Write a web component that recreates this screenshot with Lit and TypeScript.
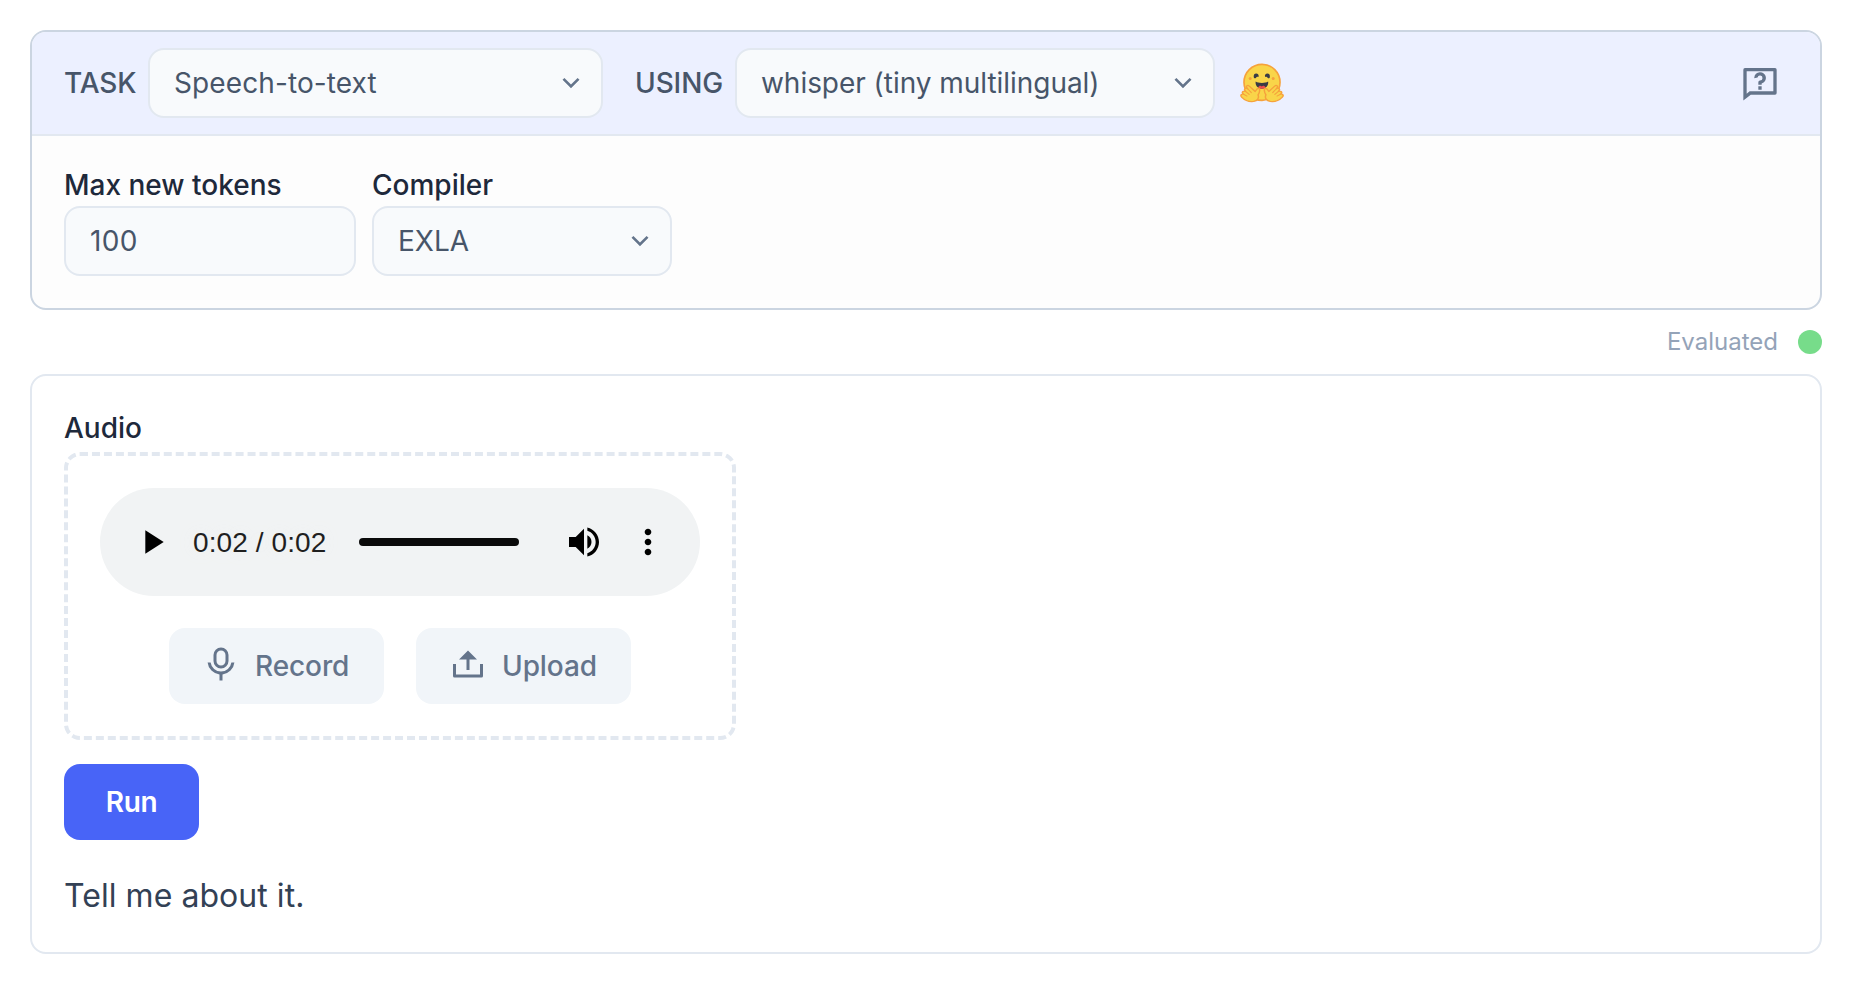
import { LitElement, html, css, svg } from "lit";
import { customElement, property } from "lit/decorators.js";

const ICONS: Record<string, string> = {
  chevron: "M12 13.172l4.95-4.95 1.414 1.414L12 16 5.636 9.636 7.05 8.222z",
  help: "M5.763 17H20V5H4v13.385L5.763 17zm.692 2L2 22.5V4a1 1 0 0 1 1-1h18a1 1 0 0 1 1 1v14a1 1 0 0 1-1 1H6.455zM11 14h2v2h-2v-2zm-2.433-5.187A3.501 3.501 0 1 1 13 12.355V13h-2v-1.5a1 1 0 0 1 1-1 1.5 1.5 0 1 0-1.471-1.794l-1.962.393z",
  mic: "M12 3a3 3 0 0 0-3 3v4a3 3 0 1 0 6 0V6a3 3 0 0 0-3-3zm0-2a5 5 0 0 1 5 5v4a5 5 0 0 1-10 0V6a5 5 0 0 1 5-5zM3.055 11H5.07a7.002 7.002 0 0 0 13.858 0h2.016A9.004 9.004 0 0 1 13 18.945V23h-2v-4.055A9.004 9.004 0 0 1 3.055 11z",
  upload: "M4 19h16v-7h2v8a1 1 0 0 1-1 1H3a1 1 0 0 1-1-1v-8h2v7zm9-10v7h-2V9H6l6-6 6 6h-5z",
  play: "M8 5v14l11-7z",
  volume: "M3 9v6h4l5 5V4L7 9H3zm13.5 3A4.5 4.5 0 0 0 14 7.97v8.05c1.48-.73 2.5-2.25 2.5-4.02zM14 3.23v2.06c2.89.86 5 3.54 5 6.71s-2.11 5.85-5 6.71v2.06c4.01-.91 7-4.49 7-8.77s-2.99-7.86-7-8.77z",
  more: "M12 8c1.1 0 2-.9 2-2s-.9-2-2-2-2 .9-2 2 .9 2 2 2zm0 2c-1.1 0-2 .9-2 2s.9 2 2 2 2-.9 2-2-.9-2-2-2zm0 6c-1.1 0-2 .9-2 2s.9 2 2 2 2-.9 2-2-.9-2-2-2z",
};

@customElement("ui-icon")
class UiIcon extends LitElement {
  @property() name = "";
  static styles = css`
    :host { display: block; flex: none; width: 40px; height: 40px; }
    svg { display: block; width: 100%; height: 100%; fill: currentColor; }
  `;
  render() {
    return html`<svg viewBox="0 0 24 24">${svg`<path d=${ICONS[this.name]}></path>`}</svg>`;
  }
}

@customElement("select-box")
class SelectBox extends LitElement {
  @property() value = "";
  static styles = css`
    :host {
      box-sizing: border-box; display: flex; align-items: center; justify-content: space-between;
      height: 70px; padding: 0 14px 0 24px; border: 2px solid #e2e8f0; border-radius: 16px;
      background: #f8fafc; color: #475569; font-size: 28px; white-space: nowrap;
    }
    .chevron { width: 32px; height: 32px; color: #64748b; }
  `;
  render() {
    return html`<span>${this.value}</span><ui-icon class="chevron" name="chevron"></ui-icon>`;
  }
}

@customElement("hugging-face")
class HuggingFace extends LitElement {
  static styles = css`
    :host { display: block; width: 44px; height: 40px; flex: none; }
    svg { display: block; width: 100%; height: 100%; overflow: visible; }
  `;
  hand() {
    return svg`
      <path d="M17.500 31.500c1.700-3 1.800-6.100.7-6.700-1.500-.7-2.100 1.300-3.200 3.200L9.800 22.400c-1.400-1.400-3.100-.2-2.200 1.400l.8 1.400c-1.500-1.300-3.500-.1-2.500 1.600l.6 1.100c-1.700-1-3.600.5-2.400 2.100l.7.900c-2.200-.5-3.100 1.300-1.700 2.900 2.400 2.900 6.300 5.300 10.600 4.600 3.100-.6 5.200-3.400 3.800-6.900z"
        fill="#f9d549" stroke="#f6a23c" stroke-width="1.300" stroke-linejoin="round"></path>
      <path d="M8.400 25.200l3.200 4M6.500 27.900l3.200 3.200M4.800 30.900l3 1.900"
        fill="none" stroke="#f6a23c" stroke-width="1" stroke-linecap="round"></path>`;
  }
  render() {
    return html`<svg viewBox="0 0 44 40">
      <circle cx="22" cy="20.300" r="18" fill="#f9d549" stroke="#f6a23c" stroke-width="1.700"></circle>
      <circle cx="10.200" cy="16.500" r="1.500" fill="#f6a23c"></circle>
      <circle cx="33.200" cy="16.500" r="1.500" fill="#f6a23c"></circle>
      <path d="M13.900 15.700c-.8-2.600.6-4.200 2.300-4.200s3 1.500 2.300 3.600c-1.100-.9-1.900-.3-2.500.6s-1.300.8-2.100 0z" fill="#3a3b45"></path>
      <path d="M29.700 15.700c.8-2.600-.6-4.200-2.300-4.200s-3 1.500-2.300 3.600c1.100-.9 1.900-.3 2.500.6s1.300.8 2.100 0z" fill="#3a3b45"></path>
      <path d="M15.700 19.600c1.500 1 3.500 1.400 6.200 1.400s4.700-.4 6.200-1.400c.8 3.500-1.900 7.200-6.200 7.200s-7-3.700-6.200-7.200z" fill="#3a3b45"></path>
      <path d="M18.100 25.500c.8-2 2.800-2 3.700-1 .9-1 2.900-1 3.900 1a6.500 6.500 0 0 1-7.600 0z" fill="#ef4e4e"></path>
      <g transform="translate(-1.900 2.600) scale(1.140 .960)">${this.hand()}</g>
      <g transform="translate(45.900 2.600) scale(-1.140 .960)">${this.hand()}</g>
    </svg>`;
  }
}

@customElement("audio-player")
class AudioPlayer extends LitElement {
  static styles = css`
    :host {
      box-sizing: border-box; display: flex; align-items: center; width: 600px; height: 108px;
      padding: 0 32px; border-radius: 54px; background: #f1f3f4; color: #000;
    }
    .time {
      margin: 2px 0 0 21px; width: 134px; white-space: nowrap; color: #1f1f1f; letter-spacing: 0.1px;
      font: 28px "Liberation Sans", Arial, sans-serif; text-shadow: 0 0 20px rgba(245, 245, 240, 0.6);
    }
    .track { margin-left: 32px; width: 160px; height: 8px; border-radius: 4px; background: #0a0a0a; }
    .volume { margin-left: 45px; }
    .more { margin-left: 24px; }
  `;
  render() {
    return html`
      <ui-icon name="play"></ui-icon>
      <span class="time">0:02 / 0:02</span>
      <div class="track"></div>
      <ui-icon class="volume" name="volume"></ui-icon>
      <ui-icon class="more" name="more"></ui-icon>
    `;
  }
}

@customElement("app-root")
class AppRoot extends LitElement {
  static styles = css`
    :host {
      box-sizing: border-box; display: block; height: 984px; padding: 30px; background: #fff;
      font-family: Inter, sans-serif; font-size: 28px; color: #475569;
    }
    .card { box-sizing: border-box; border: 2px solid #cbd5e1; border-radius: 16px; overflow: hidden; background: #fdfdfd; }
    .head {
      display: flex; align-items: center; height: 102px; padding: 0 40px 0 32px;
      border-bottom: 2px solid #e2e8f0; background: #ecf0ff;
    }
    .key { font-weight: 500; white-space: nowrap; letter-spacing: -0.1px; }
    .key-task { width: 84px; }
    .key-using { width: 100px; margin-left: 32px; }
    .task { width: 455px; letter-spacing: 0.1px; }
    .using { width: 480px; letter-spacing: -0.04px; }
    .logo { margin: 0 0 2px 25px; }
    .help { margin-left: auto; color: #64748b; }
    .fields { display: flex; gap: 16px; padding: 32px; }
    .label { height: 38px; line-height: 34px; font-weight: 500; color: #1e293b; }
    .input {
      box-sizing: border-box; width: 292px; height: 70px; padding: 0 24px; line-height: 66px;
      letter-spacing: 0.4px; border: 2px solid #e2e8f0; border-radius: 16px; background: #f8fafc;
    }
    .compiler { width: 300px; }
    .status {
      display: flex; justify-content: flex-end; align-items: center; gap: 20px; height: 24px;
      margin: 20px 0; font-size: 24px; line-height: 24px; color: #94a3b8;
    }
    .dot { width: 24px; height: 24px; border-radius: 50%; background: #77dc8a; }
    .output { box-sizing: border-box; height: 580px; padding: 34px 32px; border: 2px solid #e2e8f0; border-radius: 16px; }
    .audio-label { height: 42px; line-height: 36px; font-weight: 500; color: #1e293b; }
    .drop {
      box-sizing: border-box; display: flex; flex-direction: column; align-items: center; gap: 32px;
      width: 672px; height: 288px; padding: 32px; border: 4px dashed #e2e8f0; border-radius: 16px;
    }
    .buttons { display: flex; gap: 32px; }
    .button {
      box-sizing: border-box; display: flex; align-items: center; gap: 16px; width: 215px; height: 76px;
      padding-left: 34px; border-radius: 16px; background: #f1f5f9; color: #64748b; font-weight: 500;
      letter-spacing: -0.1px;
    }
    .button ui-icon { width: 36px; height: 36px; margin-bottom: 4px; }
    .run {
      display: flex; align-items: center; justify-content: center; width: 135px; height: 76px; margin-top: 24px;
      border-radius: 16px; background: #4864f7; color: #fff; font-weight: 600; letter-spacing: -0.3px;
    }
    .result { margin-top: 32px; line-height: 48px; font-size: 32px; letter-spacing: 0.05px; color: #334155; }
  `;
  render() {
    return html`
      <section class="card">
        <div class="head">
          <span class="key key-task">TASK</span>
          <select-box class="task" value="Speech-to-text"></select-box>
          <span class="key key-using">USING</span>
          <select-box class="using" value="whisper (tiny multilingual)"></select-box>
          <hugging-face class="logo"></hugging-face>
          <ui-icon class="help" name="help"></ui-icon>
        </div>
        <div class="fields">
          <div>
            <div class="label">Max new tokens</div>
            <div class="input">100</div>
          </div>
          <div>
            <div class="label">Compiler</div>
            <select-box class="compiler" value="EXLA"></select-box>
          </div>
        </div>
      </section>
      <div class="status"><span>Evaluated</span><span class="dot"></span></div>
      <section class="output">
        <div class="audio-label">Audio</div>
        <div class="drop">
          <audio-player></audio-player>
          <div class="buttons">
            <div class="button"><ui-icon name="mic"></ui-icon>Record</div>
            <div class="button"><ui-icon name="upload"></ui-icon>Upload</div>
          </div>
        </div>
        <div class="run">Run</div>
        <div class="result">Tell me about it.</div>
      </section>
    `;
  }
}
